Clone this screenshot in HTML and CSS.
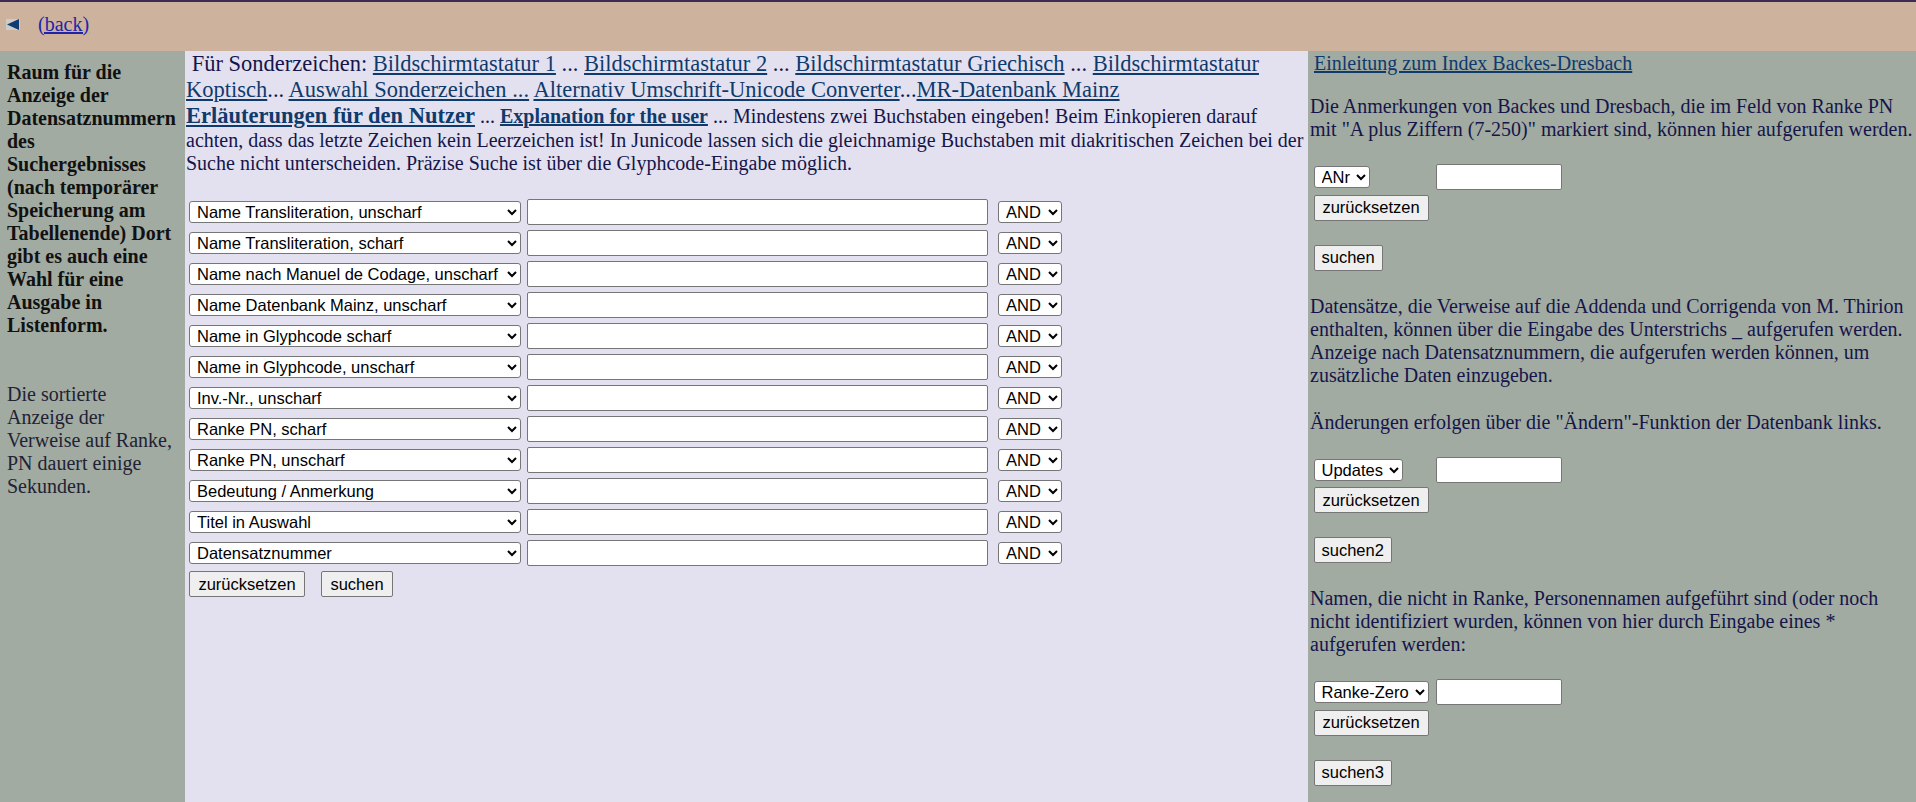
FILE: index.html
```html
<!DOCTYPE html>
<html lang="de">
<head>
<meta charset="utf-8">
<title>Index Backes-Dresbach</title>
<link rel="stylesheet" href="styles.css">
</head>
<body>
<div class="topbar">
  <span class="arrow"><svg width="14" height="11" viewBox="0 0 14 11"><rect x="0" y="0" width="14" height="11" fill="#cfccc8"/><polygon points="1,5.5 13,0 13,11" fill="#0f3c72"/></svg></span>
  <a class="back" href="#">(back)</a>
</div>
<div class="main">
  <div class="leftcol">
    <p class="lefttop">Raum für die Anzeige der Datensatznummern des Suchergebnisses (nach temporärer Speicherung am Tabellenende) Dort gibt es auch eine Wahl für eine Ausgabe in Listenform.</p>
    <p class="leftbottom">Die sortierte Anzeige der Verweise auf Ranke, PN dauert einige Sekunden.</p>
  </div>
  <div class="midcol">
    <div class="links">&nbsp;Für Sonderzeichen: <a href="#">Bildschirmtastatur 1</a> ... <a href="#">Bildschirmtastatur 2</a> ... <a href="#">Bildschirmtastatur Griechisch</a> ... <a href="#">Bildschirmtastatur</a> <a href="#">Koptisch</a>... <a href="#">Auswahl Sonderzeichen ...</a> <a href="#">Alternativ Umschrift-Unicode Converter</a>...<a href="#">MR-Datenbank Mainz</a></div>
    <div class="hint"><a class="big strong" href="#">Erläuterungen für den Nutzer</a> ... <a class="strong" href="#">Explanation for the user</a> ... Mindestens zwei Buchstaben eingeben! Beim Einkopieren darauf achten, dass das letzte Zeichen kein Leerzeichen ist! In Junicode lassen sich die gleichnamige Buchstaben mit diakritischen Zeichen bei der Suche nicht unterscheiden. Präzise Suche ist über die Glyphcode-Eingabe möglich.</div>
    <form class="search">
      <div class="row"><select class="field"><option>Name Transliteration, unscharf</option></select><input class="term" type="text"><select class="op"><option>AND</option></select></div>
      <div class="row"><select class="field"><option>Name Transliteration, scharf</option></select><input class="term" type="text"><select class="op"><option>AND</option></select></div>
      <div class="row"><select class="field"><option>Name nach Manuel de Codage, unscharf</option></select><input class="term" type="text"><select class="op"><option>AND</option></select></div>
      <div class="row"><select class="field"><option>Name Datenbank Mainz, unscharf</option></select><input class="term" type="text"><select class="op"><option>AND</option></select></div>
      <div class="row"><select class="field"><option>Name in Glyphcode scharf</option></select><input class="term" type="text"><select class="op"><option>AND</option></select></div>
      <div class="row"><select class="field"><option>Name in Glyphcode, unscharf</option></select><input class="term" type="text"><select class="op"><option>AND</option></select></div>
      <div class="row"><select class="field"><option>Inv.-Nr., unscharf</option></select><input class="term" type="text"><select class="op"><option>AND</option></select></div>
      <div class="row"><select class="field"><option>Ranke PN, scharf</option></select><input class="term" type="text"><select class="op"><option>AND</option></select></div>
      <div class="row"><select class="field"><option>Ranke PN, unscharf</option></select><input class="term" type="text"><select class="op"><option>AND</option></select></div>
      <div class="row"><select class="field"><option>Bedeutung / Anmerkung</option></select><input class="term" type="text"><select class="op"><option>AND</option></select></div>
      <div class="row"><select class="field"><option>Titel in Auswahl</option></select><input class="term" type="text"><select class="op"><option>AND</option></select></div>
      <div class="row"><select class="field"><option>Datensatznummer</option></select><input class="term" type="text"><select class="op"><option>AND</option></select></div>
      <div class="row buttons"><button type="button">zurücksetzen</button><button type="button">suchen</button></div>
    </form>
  </div>
  <div class="rightcol">
    <div class="rlink"><a href="#">Einleitung zum Index Backes-Dresbach</a></div>
    <p class="rtext first">Die Anmerkungen von Backes und Dresbach, die im Feld von Ranke PN mit "A plus Ziffern (7-250)" markiert sind, können hier aufgerufen werden.</p>
    <form class="rform">
      <div class="rrow"><span class="rsel"><select><option>ANr</option></select></span><input type="text"></div>
      <button type="button" class="reset">zurücksetzen</button>
      <button type="button" class="go">suchen</button>
    </form>
    <p class="rtext">Datensätze, die Verweise auf die Addenda und Corrigenda von M. Thirion enthalten, können über die Eingabe des Unterstrichs _ aufgerufen werden. Anzeige nach Datensatznummern, die aufgerufen werden können, um zusätzliche Daten einzugeben.</p>
    <p class="rtext">Änderungen erfolgen über die "Ändern"-Funktion der Datenbank links.</p>
    <form class="rform">
      <div class="rrow"><span class="rsel"><select><option>Updates</option></select></span><input type="text"></div>
      <button type="button" class="reset">zurücksetzen</button>
      <button type="button" class="go">suchen2</button>
    </form>
    <p class="rtext">Namen, die nicht in Ranke, Personennamen aufgeführt sind (oder noch nicht identifiziert wurden, können von hier durch Eingabe eines *<br>aufgerufen werden:</p>
    <form class="rform">
      <div class="rrow"><span class="rsel"><select><option>Ranke-Zero</option></select></span><input type="text"></div>
      <button type="button" class="reset">zurücksetzen</button>
      <button type="button" class="go">suchen3</button>
    </form>
  </div>
</div>
</body>
</html>
```

FILE: styles.css
```css
* { box-sizing: border-box; }
html, body { margin: 0; padding: 0; }
body {
  font-family: "Liberation Serif", "Times New Roman", serif;
  font-size: 20px;
  color: #15154a;
  width: 1916px;
  height: 802px;
  overflow: hidden;
  display: flex;
  flex-direction: column;
}
.topbar {
  height: 51px;
  flex: none;
  background: #cdb39e;
  border-top: 2px solid #3c2c52;
  display: flex;
  align-items: center;
  padding: 0 0 5px 6px;
}
.arrow { display: flex; width: 32px; }
.arrow svg { display: block; }
.back { color: #2323a8; text-decoration: underline; font-size: 20px; }

.main { flex: 1; display: flex; align-items: stretch; min-height: 0; }

.leftcol {
  width: 185px;
  flex: none;
  background: #a1aba1;
  padding: 10px 10px 0 7px;
  color: #111;
}
.leftcol p { margin: 0; line-height: 23px; }
.lefttop { font-weight: bold; }
.leftbottom { margin-top: 46px !important; color: #222234; }

.midcol {
  width: 1123px;
  flex: none;
  background: #e3e1f0;
  padding: 0 2px 0 1px;
}
.links { font-size: 22.5px; line-height: 26px; }
.hint { line-height: 23px; }
.midcol a { color: #0f3a6c; text-decoration: underline; }
.big { font-size: 22.5px; line-height: 26px; }
.strong { font-weight: bold; }

.search { margin-top: 24px; padding-left: 3px; display: flex; flex-direction: column; gap: 5px; }
.row { display: flex; align-items: center; height: 26px; }
select, input, button {
  font-family: "Liberation Sans", Arial, sans-serif;
  font-size: 16.5px;
  color: #000;
  margin: 0;
}
select {
  height: 22px;
  background-color: #fff;
  border: 1px solid #767676;
  border-radius: 3px;
  padding: 0 2px 0 3px;
}
input[type="text"] {
  height: 26px;
  background: #fff;
  border: 1px solid #767676;
  border-radius: 2px;
  padding: 0 3px;
}
button {
  height: 26px;
  background: #efefef;
  border: 1px solid #767676;
  border-radius: 2px;
  padding: 0 7px;
}
.field { width: 332px; }
.term { width: 461px; margin-left: 6px !important; }
.op { width: 64px; margin-left: 10px !important; }
.buttons { gap: 16px; }
.buttons button:first-child { width: 116px; }
.buttons button:last-child { width: 72px; }

.rightcol {
  flex: 1;
  background: #a1aba1;
  padding: 1px 2px 0 2px;
}
.rlink { line-height: 23px; padding-left: 4px; }
.rlink a { color: #0f3a6c; }
.rtext { margin: 24px 0 0 0; line-height: 23px; }
.rtext.first { margin-top: 20px; }
.rform { margin-top: 23px; padding-left: 3.5px; display: flex; flex-direction: column; align-items: flex-start; }
.rrow { display: flex; align-items: center; height: 26px; }
.rsel { width: 122px; display: flex; }
.rrow input { width: 126px; }
.reset { margin-top: 4.5px; width: 115px; }
.go { margin-top: 24px; }
```
